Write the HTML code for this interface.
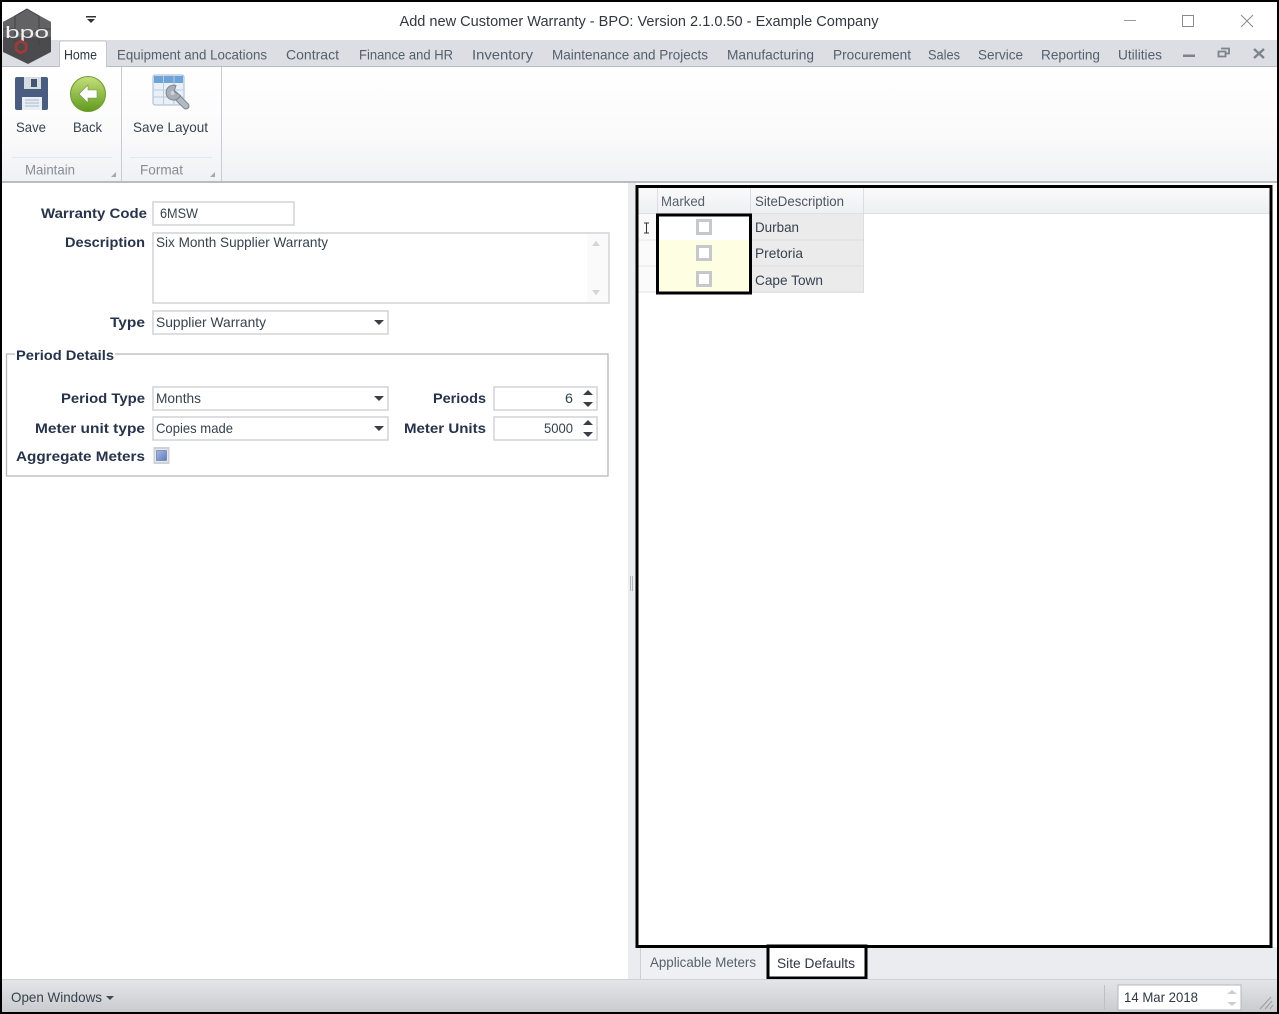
<!DOCTYPE html>
<html><head><meta charset="utf-8"><style>
html,body{margin:0;padding:0;background:#fff;width:1279px;height:1014px;overflow:hidden}
svg{display:block;filter:blur(.35px)}
text{font-family:"Liberation Sans",sans-serif;font-size:14px;fill:#37424f}
.b{font-weight:bold;fill:#27334a}
.t{fill:#55606d}
.g{fill:#868d95}
.f{fill:#fff;stroke:#d3d5d9;stroke-width:1.600}
</style></head><body>
<svg width="1279" height="1014" viewBox="0 0 1279 1014" xmlns="http://www.w3.org/2000/svg">
<defs>
<linearGradient id="rib" x1="0" y1="0" x2="0" y2="1"><stop offset="0" stop-color="#fff"/><stop offset="0.6" stop-color="#fafafb"/><stop offset="1" stop-color="#f0f1f4"/></linearGradient>
<linearGradient id="st" x1="0" y1="0" x2="0" y2="1"><stop offset="0" stop-color="#e4e5e9"/><stop offset="1" stop-color="#c9cbcf"/></linearGradient>
<linearGradient id="bk" x1="0" y1="0" x2="0" y2="1"><stop offset="0" stop-color="#c5e07a"/><stop offset="1" stop-color="#5f9a1e"/></linearGradient>
<linearGradient id="hd" x1="0" y1="0" x2="0" y2="1"><stop offset="0" stop-color="#fafafb"/><stop offset="1" stop-color="#eeeff1"/></linearGradient>
<linearGradient id="cb" x1="0" y1="0" x2="1" y2="1"><stop offset="0" stop-color="#a9b9dd"/><stop offset="1" stop-color="#5d7cc0"/></linearGradient>
</defs>
<rect width="1279" height="1014" fill="#fff"/>

<!-- tab bar -->
<rect x="2" y="40" width="1275" height="26" fill="#dcdee3"/>
<rect x="2" y="66" width="1275" height="1" fill="#b9bcc4"/>
<!-- ribbon -->
<rect x="2" y="67" width="1275" height="114" fill="url(#rib)"/>
<rect x="2" y="181" width="1275" height="2" fill="#b9bbbf"/>
<rect x="121" y="67" width="1" height="114" fill="#c9cbd0"/>
<rect x="221" y="67" width="1" height="114" fill="#c9cbd0"/>
<rect x="12" y="157" width="100" height="1" fill="#e6e7ea"/>
<rect x="130" y="157" width="82" height="1" fill="#e6e7ea"/>
<path d="M116 172v5h-5zM215 172v5h-5z" fill="#a5a8ad"/>
<!-- home tab -->
<path d="M59.500 67V43q0-2 2-2h43q2 0 2 2v24" fill="#fff" stroke="#c4c7cd"/>

<!-- logo -->
<path d="M27 9 51 22V52L28 64 3 52V22Z" fill="#4b4b4d"/>
<path d="M27 9 51 22V37H3V22Z" fill="#626265"/>
<path d="M27 9 39 16 39 29 27 36 15 29 15 16ZM3 29 15 29M39 29 51 29M15 29 15 45M39 29 39 45" fill="none" stroke="#424244"/>
<text x="5" y="38" textLength="44" lengthAdjust="spacingAndGlyphs" style="font-size:17px;fill:#ededed">bpo</text>
<path d="M21 42 26 45V51L21 54 16 51V45Z" fill="none" stroke="#a33a38" stroke-width="2.500" transform="translate(0 -1)"/>

<path d="M86 16h10v1.500H86zM87 19h8l-4 4z" fill="#333"/>

<!-- title -->
<text x="399.500" y="26" textLength="479" lengthAdjust="spacingAndGlyphs" style="font-size:15px;fill:#33383f">Add new Customer Warranty - BPO: Version 2.1.0.50 - Example Company</text>
<!-- window buttons -->
<rect x="1124" y="20" width="12" height="1" fill="#9a9a9a"/>
<rect x="1182.500" y="15.500" width="11" height="11" fill="none" stroke="#8a8a8a"/>
<path d="M1241 15 1253 27M1253 15 1241 27" stroke="#8a8a8a" fill="none"/>

<!-- tabs text -->
<text x="64" y="59.500" textLength="33" lengthAdjust="spacingAndGlyphs" style="fill:#2e3743">Home</text>
<g class="tabs">
<text class="t" x="117" y="59.500" textLength="150" lengthAdjust="spacingAndGlyphs">Equipment and Locations</text>
<text class="t" x="286" y="59.500" textLength="53" lengthAdjust="spacingAndGlyphs">Contract</text>
<text class="t" x="359" y="59.500" textLength="94" lengthAdjust="spacingAndGlyphs">Finance and HR</text>
<text class="t" x="472" y="59.500" textLength="61" lengthAdjust="spacingAndGlyphs">Inventory</text>
<text class="t" x="552" y="59.500" textLength="156" lengthAdjust="spacingAndGlyphs">Maintenance and Projects</text>
<text class="t" x="727" y="59.500" textLength="87" lengthAdjust="spacingAndGlyphs">Manufacturing</text>
<text class="t" x="833" y="59.500" textLength="78" lengthAdjust="spacingAndGlyphs">Procurement</text>
<text class="t" x="928" y="59.500" textLength="32" lengthAdjust="spacingAndGlyphs">Sales</text>
<text class="t" x="978" y="59.500" textLength="45" lengthAdjust="spacingAndGlyphs">Service</text>
<text class="t" x="1041" y="59.500" textLength="59" lengthAdjust="spacingAndGlyphs">Reporting</text>
<text class="t" x="1118" y="59.500" textLength="44" lengthAdjust="spacingAndGlyphs">Utilities</text>
</g>
<rect x="1183" y="54.500" width="12" height="2.500" fill="#7c838d"/>
<path d="M1221 48.500h8v5h-3M1218.500 51.500h7v5h-7z" fill="none" stroke="#7c838d" stroke-width="1.800"/>
<path d="M1254 49 1264 58M1264 49 1254 58" stroke="#7c838d" stroke-width="2.400" fill="none"/>

<!-- save icon -->
<rect x="15" y="77" width="33" height="33" rx="2" fill="#4a5d80"/>
<rect x="24" y="77" width="17" height="12" fill="#d7dce3"/>
<rect x="31" y="79" width="6" height="8" fill="#44546f"/>
<rect x="22" y="97" width="20" height="13" fill="#e9edf4"/>
<path d="M25 100h14M25 103h14M25 106h14" stroke="#a9b7c9"/>
<!-- back icon -->
<circle cx="88" cy="94" r="17.500" fill="url(#bk)" stroke="#6b9a2c"/>
<path d="M79 94 88 85V90H97V98H88V103Z" fill="#fff" stroke="#7a8f4c" stroke-width=".6"/>
<!-- layout icon -->
<rect x="153" y="75" width="31" height="30" rx="2" fill="#eaf0f7" stroke="#a5b8cf"/>
<rect x="154" y="76" width="29" height="7" fill="#6ea3d9"/>
<path d="M163.500 76V105M174 76V105M154 90H183M154 97H183" stroke="#bccadb"/>
<!-- wrench -->
<path d="M174 94 186 106" stroke="#7c8791" stroke-width="7" stroke-linecap="round" fill="none"/>
<path d="M174 94 186 106" stroke="#b4bac1" stroke-width="5" stroke-linecap="round" fill="none"/>
<path d="M176 85.500A7.500 7.500 0 1 0 180.500 95.500L174 91.500Z" fill="#a8afb7" stroke="#7c8791"/>
<circle cx="172.500" cy="93" r="2" fill="#cfd4da"/>

<text x="16" y="132" textLength="30" lengthAdjust="spacingAndGlyphs">Save</text>
<text x="73" y="132" textLength="29" lengthAdjust="spacingAndGlyphs">Back</text>
<text x="133" y="132" textLength="75" lengthAdjust="spacingAndGlyphs">Save Layout</text>
<text class="g" x="25" y="174.500" textLength="50" lengthAdjust="spacingAndGlyphs">Maintain</text>
<text class="g" x="140" y="174.500" textLength="43" lengthAdjust="spacingAndGlyphs">Format</text>

<!-- form -->
<text class="b" x="41" y="218" textLength="106" lengthAdjust="spacingAndGlyphs">Warranty Code</text>
<rect class="f" x="153" y="202" width="141" height="23"/>
<text x="160" y="218" textLength="38" lengthAdjust="spacingAndGlyphs">6MSW</text>

<text class="b" x="65" y="247" textLength="80" lengthAdjust="spacingAndGlyphs">Description</text>
<rect class="f" x="153" y="233" width="456" height="70"/>
<rect x="587" y="234" width="21" height="68" fill="#fafafb"/>
<path d="M592 246 596 241 600 246ZM592 290 600 290 596 295Z" fill="#d2d4d8"/>
<text x="156" y="247" textLength="172" lengthAdjust="spacingAndGlyphs">Six Month Supplier Warranty</text>

<text class="b" x="110" y="327" textLength="35" lengthAdjust="spacingAndGlyphs">Type</text>
<rect class="f" x="153" y="311" width="235" height="23"/>
<text x="156" y="327" textLength="110" lengthAdjust="spacingAndGlyphs">Supplier Warranty</text>
<path d="M374 320H384L379 325Z" fill="#3a3f47"/>

<!-- group -->
<path d="M15 354H6.500V476H608V354H115" fill="none" stroke="#b4b6ba" stroke-width="1.300"/>
<text class="b" x="16" y="360" textLength="98" lengthAdjust="spacingAndGlyphs">Period Details</text>

<text class="b" x="61" y="403" textLength="84" lengthAdjust="spacingAndGlyphs">Period Type</text>
<rect class="f" x="153" y="387" width="235" height="23"/>
<text x="156" y="403" textLength="45" lengthAdjust="spacingAndGlyphs">Months</text>
<path d="M374 396H384L379 401Z" fill="#3a3f47"/>

<text class="b" x="35" y="433" textLength="110" lengthAdjust="spacingAndGlyphs">Meter unit type</text>
<rect class="f" x="153" y="417" width="235" height="23"/>
<text x="156" y="433" textLength="77" lengthAdjust="spacingAndGlyphs">Copies made</text>
<path d="M374 426H384L379 431Z" fill="#3a3f47"/>

<text class="b" x="16" y="461" textLength="129" lengthAdjust="spacingAndGlyphs">Aggregate Meters</text>
<rect x="153.500" y="447" width="16" height="17" fill="#cfd1d5"/>
<rect x="155.500" y="449.500" width="12" height="12" fill="#fff"/>
<rect x="156.500" y="450.500" width="10" height="10" fill="url(#cb)" stroke="#4f6da8" stroke-width=".6"/>

<text class="b" x="433" y="403" textLength="53" lengthAdjust="spacingAndGlyphs">Periods</text>
<rect class="f" x="494" y="387" width="103" height="23"/>
<text x="565" y="403" textLength="8" lengthAdjust="spacingAndGlyphs">6</text>
<path d="M583 395 588 390 593 395ZM583 402H593L588 407Z" fill="#3a3f47"/>

<text class="b" x="404" y="433" textLength="82" lengthAdjust="spacingAndGlyphs">Meter Units</text>
<rect class="f" x="494" y="417" width="103" height="23"/>
<text x="544" y="433" textLength="29" lengthAdjust="spacingAndGlyphs">5000</text>
<path d="M583 425 588 420 593 425ZM583 432H593L588 437Z" fill="#3a3f47"/>

<!-- splitter -->
<rect x="628" y="183" width="8" height="797" fill="#eaecf0"/>
<rect x="630" y="576" width="1" height="15" fill="#b4b6ba"/>
<rect x="632" y="576" width="1" height="15" fill="#b4b6ba"/>

<!-- bottom tab area -->
<rect x="628" y="947" width="649" height="33" fill="#eaecf0"/>
<rect x="641" y="948" width="126" height="31" fill="#eff0f3"/>
<rect x="640" y="948" width="1" height="31" fill="#cdcfd3"/>
<rect x="767" y="946" width="100" height="33" fill="#fff"/>
<rect x="768" y="946" width="98" height="32" fill="#fff" stroke="#000" stroke-width="3"/>
<text class="t" x="650" y="967" textLength="106" lengthAdjust="spacingAndGlyphs">Applicable Meters</text>
<text x="777" y="968" textLength="78" lengthAdjust="spacingAndGlyphs" style="fill:#2e3743">Site Defaults</text>

<!-- grid -->
<rect x="638" y="188" width="632" height="26" fill="url(#hd)"/>
<rect x="638" y="213" width="632" height="1" fill="#dfe0e3"/>
<rect x="657" y="188" width="1" height="26" fill="#dcdde0"/>
<rect x="750" y="188" width="1" height="26" fill="#dcdde0"/>
<rect x="863" y="188" width="1" height="26" fill="#dcdde0"/>
<text class="t" x="661" y="206" textLength="44" lengthAdjust="spacingAndGlyphs">Marked</text>
<text x="755" y="206" textLength="89" lengthAdjust="spacingAndGlyphs" style="fill:#4b5563">SiteDescription</text>

<rect x="638" y="214" width="19" height="79" fill="#fafafb"/>
<path d="M638 240H657M638 266H657M638 292H657" stroke="#e6e7ea"/>
<rect x="657" y="240" width="93" height="53" fill="#fefee3"/>
<rect x="751" y="214" width="113" height="79" fill="#ebebec"/>
<path d="M751 240H864M751 266H864M751 292H864" stroke="#dcdddf"/>
<rect x="863" y="214" width="1" height="79" fill="#dcdddf"/>
<path d="M644 223h5M644 233h5M646.500 223v10" stroke="#333" fill="none"/>

<g fill="#c6c8cd">
<rect x="696" y="219" width="16" height="16"/>
<rect x="696" y="245" width="16" height="16"/>
<rect x="696" y="271" width="16" height="16"/>
</g>
<g fill="#fff">
<rect x="699" y="222" width="10" height="10"/>
<rect x="699" y="248" width="10" height="10"/>
<rect x="699" y="274" width="10" height="10"/>
</g>
<text x="755" y="232" textLength="44" lengthAdjust="spacingAndGlyphs">Durban</text>
<text x="755" y="258" textLength="48" lengthAdjust="spacingAndGlyphs">Pretoria</text>
<text x="755" y="285" textLength="68" lengthAdjust="spacingAndGlyphs">Cape Town</text>

<!-- annotation boxes -->
<rect x="657.500" y="215" width="93" height="78" fill="none" stroke="#000" stroke-width="3"/>
<rect x="637" y="186.500" width="634" height="760" fill="none" stroke="#000" stroke-width="3"/>

<!-- status bar -->
<rect x="2" y="980" width="1275" height="32" fill="url(#st)"/>
<rect x="2" y="979" width="1275" height="1" fill="#cfd1d5"/>
<text x="11" y="1002" textLength="91" lengthAdjust="spacingAndGlyphs">Open Windows</text>
<path d="M106 996H114L110 1000Z" fill="#3f4a57"/>
<rect x="1104" y="985" width="1" height="24" fill="#bdbfc3"/>
<rect x="1118" y="985" width="123" height="25" fill="#fff" stroke="#b5b7bb"/>
<text x="1124" y="1002" textLength="74" lengthAdjust="spacingAndGlyphs" style="fill:#2e3743">14 Mar 2018</text>
<path d="M1227 994 1232 990 1237 994ZM1227 1002H1237L1232 1006Z" fill="#ccced2"/>
<path d="M1260 1009 1271 997M1265 1009 1272 1001M1270 1009 1273 1005" stroke="#9a9ca1" fill="none"/>

<!-- outer border -->
<rect x="1" y="1" width="1277" height="1012" fill="none" stroke="#000" stroke-width="2"/>
</svg>
</body></html>
